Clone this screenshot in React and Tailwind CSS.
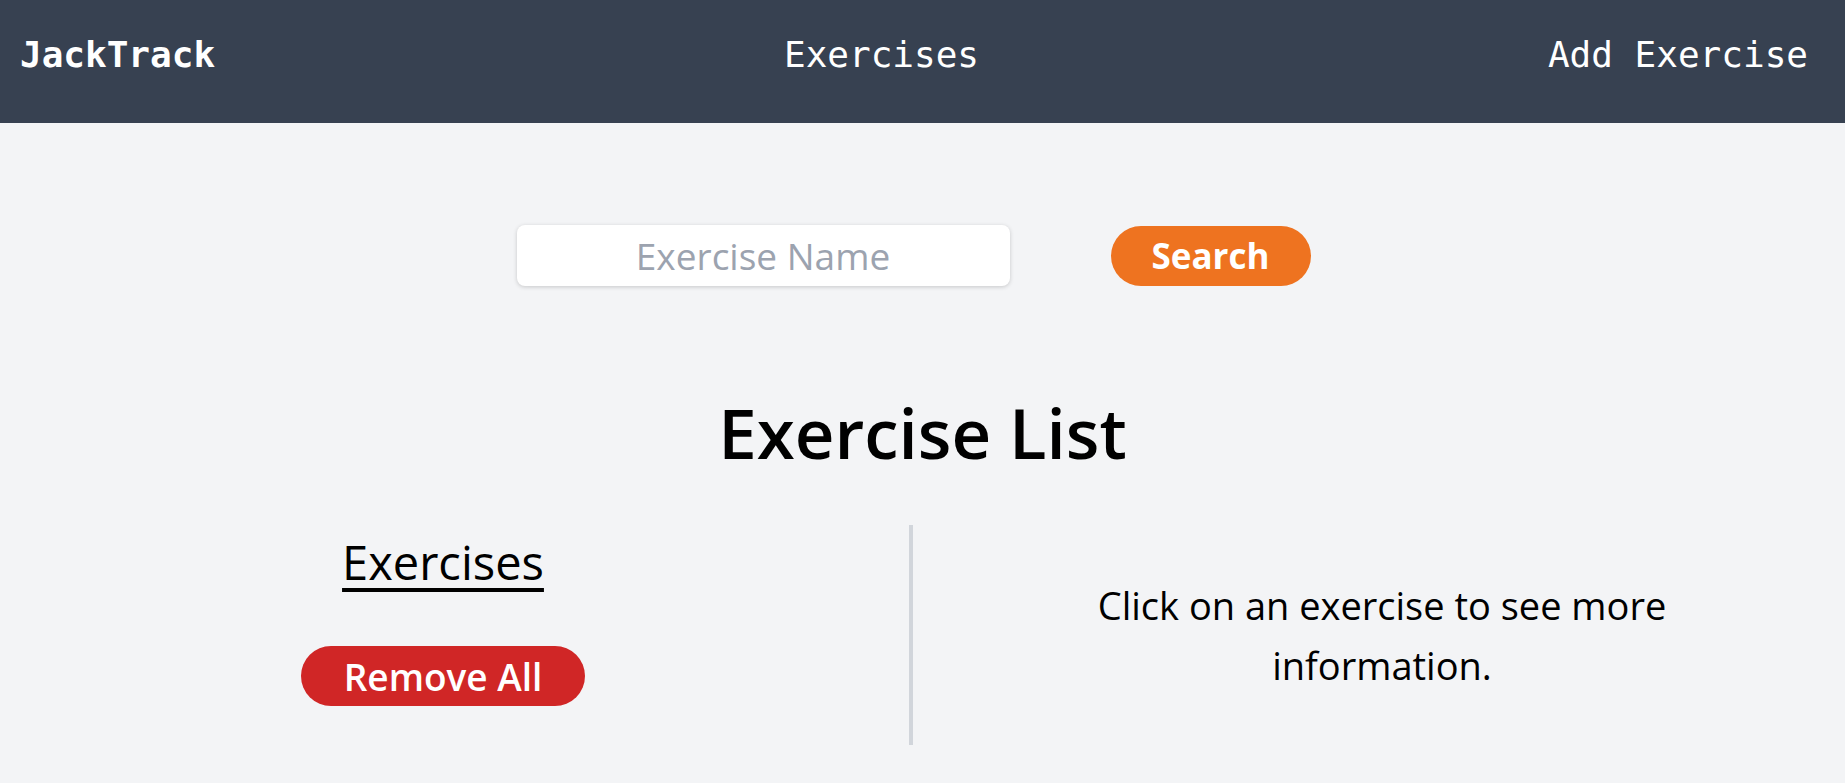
export default function App() {
  return (
    <div className="min-h-[783px] bg-[#f3f4f6] font-['Open_Sans',sans-serif]">
      <nav className="h-[123px] bg-[#374151] flex items-center justify-between pl-5 pr-[37px] pb-[14px] font-['DejaVu_Sans_Mono',monospace] text-white text-[36px] leading-[36px]">
        <span className="font-bold">JackTrack</span>
        <span>Exercises</span>
        <span>Add Exercise</span>
      </nav>

      <div className="flex justify-center items-center gap-[101px] pr-[18px] mt-[102px]">
        <input
          type="text"
          placeholder="Exercise Name"
          className="w-[493px] h-[61px] bg-white rounded-lg shadow-[0_1px_4px_rgba(0,0,0,0.18)] text-center text-[37px] placeholder:text-[#9ca3af] outline-none font-['Open_Sans',sans-serif]"
        />
        <button className="w-[200px] h-[60px] rounded-full bg-[#ee7320] text-white font-bold text-[35px] leading-none font-['Open_Sans',sans-serif]">
          Search
        </button>
      </div>

      <h1 className="text-center text-black text-[69px] font-semibold leading-none mt-[112px]">
        Exercise List
      </h1>

      <div className="flex mt-[58px]">
        <div className="w-[886px] flex flex-col items-center">
          <h2 className="text-[47px] font-medium leading-[74px] underline decoration-[4px] underline-offset-[8px] text-black">
            Exercises
          </h2>
          <button className="mt-[47px] w-[284px] h-[60px] rounded-full bg-[#d02626] text-white font-semibold text-[37px] leading-none">
            Remove All
          </button>
        </div>
        <div className="ml-[23px] w-[4px] h-[220px] bg-[#d1d5db]"></div>
        <div className="ml-[6px] flex-1 flex items-center justify-center">
          <p className="text-center text-black text-[38px] leading-[60px]">
            Click on an exercise to see more
            <br />
            information.
          </p>
        </div>
      </div>
    </div>
  );
}
